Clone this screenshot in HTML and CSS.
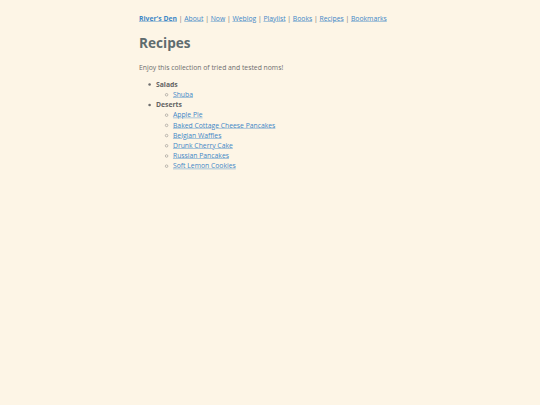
FILE: index.html
```html
<!DOCTYPE html>
<html>
<head>
<meta charset="utf-8">
<link rel="stylesheet" href="styles.css">
</head>
<body>
<div class="frame">
<div class="canvas">
<div class="page">
  <nav class="nav">
    <a href="#" class="home">River's Den</a> | <a href="#">About</a> | <a href="#">Now</a> | <a href="#">Weblog</a> | <a href="#">Playlist</a> | <a href="#">Books</a> | <a href="#">Recipes</a> | <a href="#">Bookmarks</a>
  </nav>
  <h1 class="title">Recipes</h1>
  <p class="intro">Enjoy this collection of tried and tested noms!</p>
  <ul class="cats">
    <li><strong>Salads</strong>
      <ul class="items">
        <li><a href="#">Shuba</a></li>
      </ul>
    </li>
    <li><strong>Deserts</strong>
      <ul class="items">
        <li><a href="#">Apple Pie</a></li>
        <li><a href="#">Baked Cottage Cheese Pancakes</a></li>
        <li><a href="#">Belgian Waffles</a></li>
        <li><a href="#">Drunk Cherry Cake</a></li>
        <li><a href="#">Russian Pancakes</a></li>
        <li><a href="#">Soft Lemon Cookies</a></li>
      </ul>
    </li>
  </ul>
</div>
</div>
</div>
</body>
</html>
```
FILE: styles.css
```css
html, body {
  margin: 0;
  padding: 0;
  background: #fdf5e6;
  overflow: hidden;
}
.frame {
  width: 540px;
  height: 405px;
  overflow: hidden;
}
.canvas {
  width: 1270px;
  transform: scale(0.425);
  transform-origin: 0 0;
  font-family: "Open Sans", "Noto Sans", sans-serif;
  font-size: 16px;
  line-height: 24px;
  color: #6e6e6e;
}
.page {
  width: 616px;
  margin: 0 auto;
  padding-top: 30.5px;
}
a {
  color: #3d87c6;
}
.nav {
  margin: 0;
}
.home {
  font-weight: bold;
}
.title {
  font-size: 32px;
  line-height: 48px;
  color: #5f6c6f;
  margin: 23px 0 0;
  font-weight: bold;
}
.intro {
  margin: 20.5px 0 0;
}
.cats {
  margin: 16px 0 0;
  padding-left: 40px;
  list-style: disc;
}
.cats strong {
  color: #636363;
}
.items {
  margin: 0;
  padding-left: 40px;
  list-style: circle;
}
```
